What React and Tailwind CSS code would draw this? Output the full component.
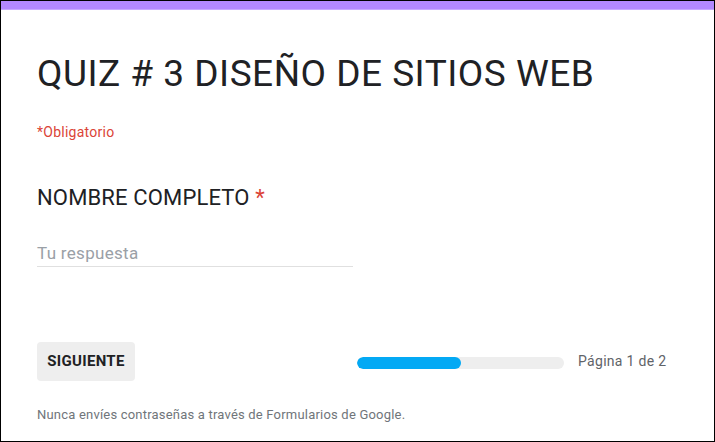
export default function App() {
  return (
    <div className="w-[715px] h-[442px] bg-white border border-black overflow-hidden font-['Roboto',sans-serif]">
      <div className="h-[9px] bg-[#b388ff] border-b border-[#c7a8ff]" />
      <div className="pl-[36px]">
        <h1 className="mt-[40px] text-[37px] leading-[48px] text-[#202124] tracking-[0.5px]">QUIZ # 3 DISEÑO DE SITIOS WEB</h1>
        <div className="mt-[24px] text-[14px] leading-[20px] text-[#db4437] tracking-[0.25px]">*Obligatorio</div>

        <div className="mt-[42px] text-[22px] leading-[28px] text-[#202124] tracking-[0.15px]">
          NOMBRE COMPLETO <span className="text-[#db4437]">*</span>
        </div>
        <div className="mt-[30px] w-[316px] border-b border-[#e0e0e0] pb-[2px] text-[17px] leading-[22px] text-[#9aa0a6] tracking-[0.3px]">
          Tu respuesta
        </div>

        <div className="mt-[75px] flex items-center">
          <button className="w-[98px] h-[39px] rounded-[4px] bg-[#eeeeee] text-[15px] font-bold text-[#202124] tracking-[0.3px]">
            SIGUIENTE
          </button>
          <div className="ml-[222px] w-[207px] h-[12px] rounded-full bg-[#eeeeee] overflow-hidden translate-y-[1px]">
            <div className="w-[104px] h-full rounded-full bg-[#03a9f4]" />
          </div>
          <span className="ml-[14px] whitespace-nowrap text-[14px] text-[#5f6368] tracking-[0.3px]">Página 1 de 2</span>
        </div>

        <div className="mt-[26px] text-[13px] leading-[16px] text-[#70757a] tracking-[0.2px]">
          Nunca envíes contraseñas a través de Formularios de Google.
        </div>
      </div>
    </div>
  );
}
